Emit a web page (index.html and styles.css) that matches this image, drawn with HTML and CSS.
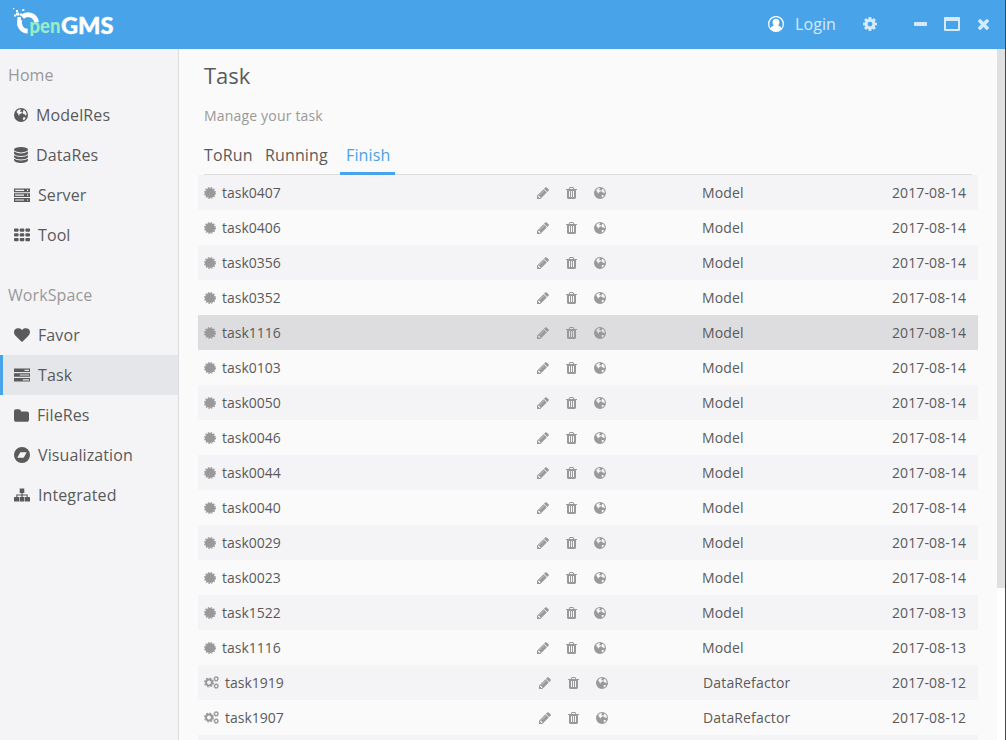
FILE: index.html
```html
<!DOCTYPE html>
<html lang="en">
<head>
<meta charset="utf-8">
<title>OpenGMS</title>
<link rel="stylesheet" href="styles.css">
</head>
<body>
<svg class="defs" aria-hidden="true">
  <symbol id="globe" viewBox="0 0 14 14"><path fill-rule="evenodd" d="M7 0a7 7 0 1 1 0 14a7 7 0 0 1 0-14zM4.400 1.700L2.700 3.200L2.900 4.700L4.200 6.100L4.600 7.600L5.300 7.500L5.500 6.300L7.200 5.500L8.300 4.300L7.300 3.600L6.300 4.100L6 3L7.200 2.200L6.500 1.200zM9.300 2L9.100 3.500L8.500 4.700L9.300 6L10.700 6.200L11.700 7.700L12.600 6.400L12.100 4.200L10.900 2.500zM9.700 9.200L8.700 10L9.300 11L8.900 12.300L10.400 11.700L11.700 10.200L11 9.200z"/></symbol>
  <symbol id="database" viewBox="0 0 14 16"><ellipse cx="7" cy="2.7" rx="7" ry="2.7"/><path d="M0 4.6Q2.5 6.4 7 6.4T14 4.6V6.4Q13 8.9 7 8.9T0 6.4zM0 8.2Q2.5 10 7 10T14 8.2V9.9Q13 12.4 7 12.4T0 9.9zM0 11.7Q2.5 13.5 7 13.5T14 11.7V13.3Q13 16 7 16T0 13.3z"/></symbol>
  <symbol id="server" viewBox="0 0 16 14"><path fill-rule="evenodd" d="M0 .5H16V4.3H0zM1.2 1.8V3H10V1.8zM13 1.8V3H14.200V1.8zM0 5.3H16V9.1H0zM1.2 6.6V7.8H10V6.6zM13 6.6V7.8H14.200V6.6zM0 10.1H16V13.9H0zM1.2 11.4V12.6H10V11.4zM13 11.4V12.6H14.200V11.4z"/></symbol>
  <symbol id="grid" viewBox="0 0 16 14"><path d="M.7.5H4l.6.6V3l-.6.7H.7L0 3V1.100zM6.400.5H9.700l.6.6V3l-.6.7H6.400L5.700 3V1.100zM12.100.5H15.400l.6.6V3l-.6.7H12.100L11.400 3V1.100zM.7 5.300H4l.6.6V7.800l-.6.7H.7L0 7.800V5.900zM6.400 5.300H9.700l.6.6V7.800l-.6.7H6.400L5.700 7.800V5.900zM12.100 5.300H15.400l.6.6V7.800l-.6.7H12.100L11.400 7.800V5.900zM.7 10H4l.6.6V12.500l-.6.7H.7L0 12.500V10.600zM6.400 10H9.700l.6.6V12.500l-.6.7H6.400L5.700 12.500V10.600zM12.100 10H15.400l.6.6V12.500l-.6.7H12.100L11.400 12.500V10.600z"/></symbol>
  <symbol id="heart" viewBox="0 128 1792 1536"><path d="M896 1664q-26 0-44-18l-624-602q-10-8-27.5-26t-55.500-65.500-68-97.500-53.500-121-23.500-138q0-220 127-344t351-124q62 0 126.500 21.500t120 58 95.500 68.500 76 68q36-36 76-68t95.500-68.500 120-58 126.500-21.500q224 0 351 124t127 344q0 221-229 450l-623 600q-18 18-44 18z"/></symbol>
  <symbol id="tasks" viewBox="0 0 16 14"><path fill-rule="evenodd" d="M0 .5H16V4H0zM10.500 1.700V2.900H15V1.700zM0 5.200H16V8.800H0zM5.800 6.400V7.600H15V6.400zM0 10H16V13.600H0zM8.800 11.200V12.400H15V11.200z"/></symbol>
  <symbol id="folder" viewBox="64 128 1664 1408"><path d="M1728 608v704q0 92-66 158t-158 66h-1216q-92 0-158-66t-66-158v-960q0-92 66-158t158-66h320q92 0 158 66t66 158v32h672q92 0 158 66t66 158z"/></symbol>
  <symbol id="bandcamp" viewBox="0 0 16 16"><path fill-rule="evenodd" d="M8 0a8 8 0 1 1 0 16a8 8 0 0 1 0-16zM6.300 5.200L3.300 10.700H9.700L12.700 5.200z"/></symbol>
  <symbol id="sitemap" viewBox="0 0 16 14"><path d="M5.700.6H10.300V5H8.600V6.500H13.700V9H15.500L16 9.500V13.500H11V9H12.600V7.600H8.600V9H10.400V13.500H5.600V9H7.400V7.600H3.400V9H5V13.500H0V9.500L.5 9H2.300V6.500H7.400V5H5.700z"/></symbol>
  <symbol id="pencil" viewBox="128 128 1536 1536"><path d="M491 1536l91-91-235-235-91 91v107h128v128h107zm523-928q0-22-22-22-10 0-17 7l-542 542q-7 7-7 17 0 22 22 22 10 0 17-7l542-542q7-7 7-17zm-54-192l416 416-832 832h-416v-416zm683 96q0 53-37 90l-166 166-416-416 166-165q36-38 90-38 53 0 91 38l235 234q37 39 37 91z"/></symbol>
  <symbol id="trash" viewBox="192 128 1408 1536"><path d="M704 1376v-704q0-14-9-23t-23-9h-64q-14 0-23 9t-9 23v704q0 14 9 23t23 9h64q14 0 23-9t9-23zm256 0v-704q0-14-9-23t-23-9h-64q-14 0-23 9t-9 23v704q0 14 9 23t23 9h64q14 0 23-9t9-23zm256 0v-704q0-14-9-23t-23-9h-64q-14 0-23 9t-9 23v704q0 14 9 23t23 9h64q14 0 23-9t9-23zm-544-992h448l-48-117q-7-9-17-11h-317q-10 2-17 11zm928 32v64q0 14-9 23t-23 9h-96v948q0 83-47 143.500t-113 60.500h-832q-66 0-113-58.500t-47-141.500v-952h-96q-14 0-23-9t-9-23v-64q0-14 9-23t23-9h309l70-167q15-37 54-63t79-26h320q40 0 79 26t54 63l70 167h309q14 0 23 9t9 23z"/></symbol>
  <symbol id="cog" viewBox="128 128 1536 1536"><path d="M1152 896q0-106-75-181t-181-75-181 75-75 181 75 181 181 75 181-75 75-181zm512-109v222q0 12-8 23t-20 13l-185 28q-19 54-39 91 35 50 107 138 10 12 10 25t-9 23q-27 37-99 108t-94 71q-12 0-26-9l-138-108q-44 23-91 38-16 136-29 186-7 28-36 28h-222q-14 0-24.500-8.500t-11.500-21.500l-28-184q-49-16-90-37l-141 107q-10 9-25 9-14 0-25-11-126-114-165-168-7-10-7-23 0-12 8-23 15-21 51-66.500t54-70.500q-27-50-41-99l-183-27q-13-2-21-12.500t-8-23.500v-222q0-12 8-23t19-13l186-28q14-46 39-92-40-57-107-138-10-12-10-24 0-10 9-23 26-36 98.500-107.500t94.500-71.500q13 0 26 10l138 107q44-23 91-38 16-136 29-186 7-28 36-28h222q14 0 24.500 8.500t11.500 21.500l28 184q49 16 90 37l142-107q9-9 24-9 13 0 25 10 129 119 165 170 7 8 7 22 0 12-8 23-15 21-51 66.500t-54 70.500q26 50 41 98l183 28q13 2 21 12.500t8 23.500z"/></symbol>
  <symbol id="cogs" viewBox="0 0 15 13"><g fill="none" stroke="currentColor"><circle cx="5" cy="6.500" r="3" stroke-width="2.100"/><circle cx="5" cy="6.500" r="4.400" stroke-width="1.200" stroke-dasharray="1.730"/><circle cx="12.200" cy="2.900" r="1.700" stroke-width="1.200"/><circle cx="12.200" cy="2.900" r="2.500" stroke-width=".8" stroke-dasharray=".98"/><circle cx="12.200" cy="10.100" r="1.700" stroke-width="1.200"/><circle cx="12.200" cy="10.100" r="2.500" stroke-width=".8" stroke-dasharray=".98"/></g></symbol>
  <symbol id="certificate" viewBox="0 0 12 12"><circle cx="6" cy="6" r="5.100"/><circle cx="6" cy="6" r="5.400" fill="none" stroke="currentColor" stroke-width="1.200" stroke-dasharray="1.414"/></symbol>
  <symbol id="user" viewBox="0 0 16 16"><circle cx="8" cy="8" r="7.400" fill="none" stroke="currentColor" stroke-width="1.200"/><path d="M8 2.700c2.200 0 3.400 1.500 3.400 3.500 0 1.300-.5 2.500-1.300 3.200 1.700.5 2.900 1.400 3.400 3.300C12.200 14.400 10.200 15.300 8 15.300S3.800 14.400 2.500 12.700C3 10.800 4.200 9.900 5.900 9.400 5.100 8.700 4.600 7.500 4.600 6.200 4.600 4.200 5.800 2.700 8 2.700z"/></symbol>
  <symbol id="close" viewBox="302 366 1188 1188"><path d="M1490 1322q0 40-28 68l-136 136q-28 28-68 28t-68-28l-294-294-294 294q-28 28-68 28t-68-28l-136-136q-28-28-28-68t28-68l294-294-294-294q-28-28-28-68t28-68l136-136q28-28 68-28t68 28l294 294 294-294q28-28 68-28t68 28l136 136q28 28 28 68t-28 68l-294 294 294 294q28 28 28 68z"/></symbol>
</svg>
<div class="window">
  <header class="topbar">
    <svg class="logo" viewBox="0 0 110 40">
      <path class="logo-ring" d="M27.700 31.200A8.400 8.400 0 0 1 20 19.700M22.300 17A8.400 8.400 0 0 1 36.500 22.300"/>
      <path class="logo-bits" d="M13 8h1.300v1.300H13zM16 10h2v2h-2zM22.300 9h2v2h-2zM14 14.500h2v2h-2zM16 12.500h3v3h-3zM19.500 13.500h2.500v2h-2.500zM17.500 17h3.500v3h-3.500z"/>
      <text class="logo-pen" x="29.500" y="33" textLength="31" lengthAdjust="spacingAndGlyphs">pen</text>
      <text class="logo-gms" x="61" y="33.500" textLength="52.500" lengthAdjust="spacingAndGlyphs">GMS</text>
    </svg>
    <div class="controls">
      <svg class="i-user"><use href="#user"/></svg><span class="login">Login</span>
      <svg class="i-cog"><use href="#cog"/></svg>
      <span class="minimize"></span><span class="maximize"></span>
      <svg class="i-close"><use href="#close"/></svg>
    </div>
  </header>
  <div class="body">
    <nav class="sidebar">
      <div class="group">Home</div>
      <a class="item"><svg class="w14 round"><use href="#globe"/></svg>ModelRes</a>
      <a class="item"><svg class="w14 tall"><use href="#database"/></svg>DataRes</a>
      <a class="item"><svg><use href="#server"/></svg>Server</a>
      <a class="item"><svg><use href="#grid"/></svg>Tool</a>
      <div class="group second">WorkSpace</div>
      <a class="item"><svg><use href="#heart"/></svg>Favor</a>
      <a class="item active"><svg><use href="#tasks"/></svg>Task</a>
      <a class="item"><svg class="w15"><use href="#folder"/></svg>FileRes</a>
      <a class="item"><svg class="tall"><use href="#bandcamp"/></svg>Visualization</a>
      <a class="item"><svg><use href="#sitemap"/></svg>Integrated</a>
    </nav>
    <main class="content">
      <h1 class="title">Task</h1>
      <p class="subtitle">Manage your task</p>
      <div class="tabs"><a class="tab first">ToRun</a><a class="tab">Running</a><a class="tab current">Finish</a></div>
      <div class="list" id="list"></div>
    </main>
    <div class="scroll"><div class="thumb"></div></div>
  </div>
</div>
<script src="tasks.js"></script>
</body>
</html>
```
FILE: styles.css
```css
* { box-sizing: border-box; }
body { margin: 0; font-family: "Open Sans", sans-serif; color: #5a5a5a; overflow: hidden; }
svg { fill: currentColor; flex: none; display: block; }
.defs { display: none; }
.window { width: 1006px; height: 740px; display: flex; flex-direction: column; border-right: 1px solid #45484b; background: #fafafa; overflow: hidden; }
.topbar { height: 49px; flex: none; background: #48a3e9; display: flex; justify-content: space-between; }
.logo { width: 110px; height: 40px; overflow: visible; }
.logo-ring { fill: none; stroke: #fff; stroke-width: 4.800; }
.logo-bits { fill: #fff; }
.logo-pen { font: 900 20px Lato, sans-serif; fill: #96edc8; }
.logo-gms { font: 900 23px Lato, sans-serif; fill: #fff; stroke: #fff; stroke-width: .4; }
.controls { display: flex; align-items: center; height: 48px; padding-right: 16px; color: #d5eafb; }
.i-user { width: 16px; height: 16px; color: #fff; margin-right: 11px; }
.login { font-size: 16px; width: 42px; margin-right: 26px; letter-spacing: .1px; }
.i-cog { width: 14px; height: 14px; margin-right: 37px; }
.minimize { width: 13px; height: 4px; background: currentColor; border-radius: 1px; margin-right: 17px; }
.maximize { width: 16px; height: 14px; border: 2px solid; border-top-width: 4px; border-radius: 1px; margin-right: 18px; }
.i-close { width: 11px; height: 11px; margin-top: 1px; }
.body { flex: 1; min-height: 0; display: flex; }
.sidebar { width: 179px; flex: none; background: #f4f4f7; border-right: 1px solid #dddde0; padding-top: 6px; font-size: 16px; line-height: 40px; letter-spacing: .1px; }
.group { padding-left: 8px; color: #999; height: 40px; }
.second { margin-top: 20px; }
.item { display: flex; align-items: center; gap: 8px; height: 40px; padding-left: 11px; border-left: 3px solid transparent; }
.item svg { width: 16px; height: 14px; }
.item svg.w14 { width: 14px; }
.item svg.w15 { width: 15px; height: 13px; }
.item svg.tall { height: 16px; }
.item.active { background: #e5e6ea; border-left-color: #48a3e9; }
.content { flex: 1; padding-left: 19px; }
.title { margin: 11px 0 0 6px; font-size: 22px; line-height: 30px; font-weight: 400; }
.subtitle { margin: 16px 0 0 6px; font-size: 14px; line-height: 20px; letter-spacing: .18px; color: #999; }
.tabs { margin: 9px 0 0 6px; width: 768px; height: 40px; display: flex; border-bottom: 1px solid #ddd; font-size: 16px; line-height: 40px; letter-spacing: .14px; }
.tab { height: 40px; padding: 0 6px; }
.tab.first { padding-left: 0; width: 55px; }
.tab:nth-child(2) { width: 75px; }
.tab.current { margin-left: 6px; width: 55px; color: #48a3e9; border-bottom: 3px solid #48a3e9; }
.row { width: 780px; height: 35px; display: flex; align-items: center; padding-left: 6px; font-size: 14px; line-height: 35px; }
.row:nth-child(odd) { background: #f4f4f7; }
.row.hover { background: #dddddf; }
.row svg { color: #999; width: 12px; height: 12px; }
.row .kind { margin-right: 6px; }
.row .name { width: 315px; }
.row .edit { margin-right: 17px; }
.row .remove { width: 11px; margin-right: 17px; }
.row .type { width: 190px; margin-left: 96px; letter-spacing: .15px; }
.row .date { letter-spacing: .12px; }
.row.refactor .kind { width: 15px; height: 13px; }
.row.refactor .name { width: 314px; }
.row.refactor .type { width: 189px; margin-left: 95px; }
.scroll { width: 8px; background: #fff; }
.thumb { height: 539px; background: #e0e0e0; }
```
FILE: tasks.js
```js
const tasks = [
  ["task0407", "Model", "14"], ["task0406", "Model", "14"], ["task0356", "Model", "14"],
  ["task0352", "Model", "14"], ["task1116", "Model", "14", "hover"], ["task0103", "Model", "14"],
  ["task0050", "Model", "14"], ["task0046", "Model", "14"], ["task0044", "Model", "14"],
  ["task0040", "Model", "14"], ["task0029", "Model", "14"], ["task0023", "Model", "14"],
  ["task1522", "Model", "13"], ["task1116", "Model", "13"],
  ["task1919", "DataRefactor", "12"], ["task1907", "DataRefactor", "12"]
];
const icon = (cls, id) => `<svg class="${cls}"><use href="#${id}"/></svg>`;
document.getElementById("list").innerHTML = tasks.map(([name, type, day, state = ""]) => {
  const refactor = type === "DataRefactor";
  return `<div class="row ${state} ${refactor ? "refactor" : ""}">
    ${icon("kind", refactor ? "cogs" : "certificate")}<span class="name">${name}</span>
    ${icon("edit", "pencil")}${icon("remove", "trash")}${icon("world", "globe")}
    <span class="type">${type}</span><span class="date">2017-08-${day}</span>
  </div>`;
}).join("") + '<div class="row"></div>';
```
